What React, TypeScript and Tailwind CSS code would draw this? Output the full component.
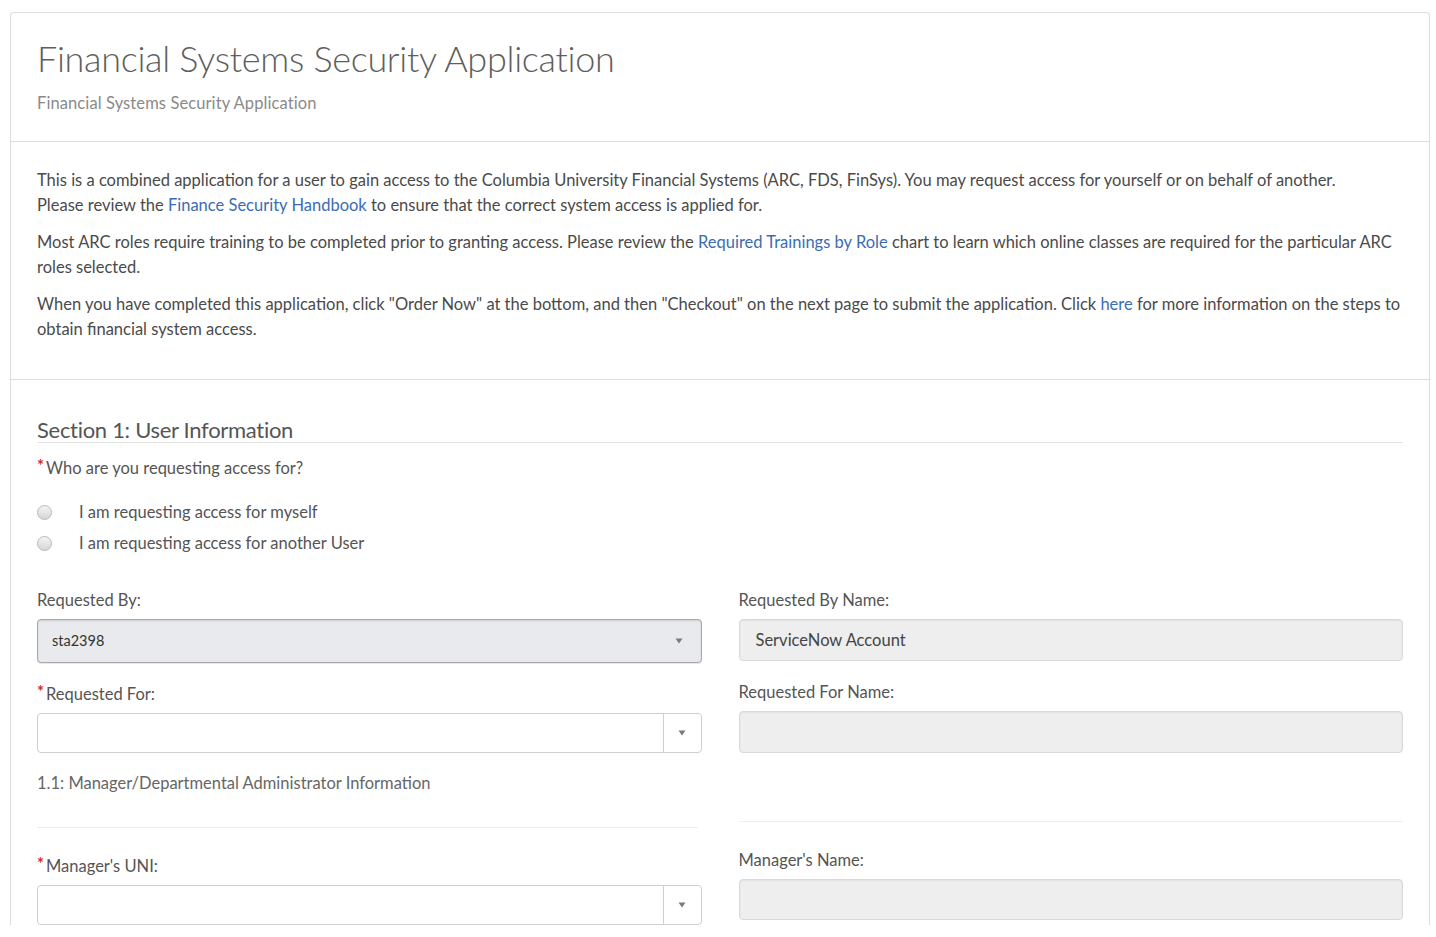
import React from "react";

const font = { fontFamily: "Lato, 'Noto Sans', sans-serif" };

function Caret() {
  return (
    <svg width="8" height="6" viewBox="0 0 8 6" className="block">
      <path d="M0.5 0.5 L7.5 0.5 L4 5.5 Z" fill="#7a7a7a" />
    </svg>
  );
}

function Req() {
  return <span className="text-[#c9302c] font-bold mr-[2px] relative top-[-2px]">*</span>;
}

function Radio({ label }: { label: string }) {
  return (
    <div className="flex items-center h-[31px]">
      <span className="w-[15px] h-[15px] rounded-full border border-[#b9b9b9] bg-gradient-to-b from-[#f4f4f4] to-[#d6d6d6] shrink-0" />
      <span className="ml-[27px] text-[16.5px] text-[#555]">{label}</span>
    </div>
  );
}

function EmptySelect() {
  return (
    <div className="flex h-[40px] rounded-[4px] border border-[#cfcfcf] bg-white">
      <div className="flex-1" />
      <div className="w-[38px] border-l border-[#cfcfcf] flex items-center justify-center">
        <Caret />
      </div>
    </div>
  );
}

function ReadOnly({ value, h = 42 }: { value?: string; h?: number }) {
  return (
    <div
      className={`${h === 42 ? "h-[42px]" : "h-[41px]"} rounded-[4px] border border-[#d9d9d9] bg-[#eeeeee] shadow-[inset_0_1px_2px_rgba(0,0,0,0.06)] flex items-center px-[16px] text-[16.5px] text-[#444]`}
    >
      {value}
    </div>
  );
}

export default function App() {
  return (
    <div className="bg-white min-h-[937px] pt-[12px] pl-[10px] pr-[6px]" style={font}>
      <div className="border border-[#dddddd] rounded-t-[4px] border-b-0">
        {/* header */}
        <div className="px-[26px] pt-[24px] pb-[28px] border-b border-[#dddddd]">
          <h1 className="text-[36px] leading-[42px] font-light text-[#5e5e5e] tracking-[-0.3px]">
            Financial Systems Security Application
          </h1>
          <div className="mt-[14px] text-[16.5px] leading-[20px] text-[#8a8a8a] tracking-[0.1px]">
            Financial Systems Security Application
          </div>
        </div>

        {/* intro */}
        <div className="px-[26px] pt-[26px] pb-[37px] border-b border-[#dddddd] text-[16.5px] leading-[25px] text-[#4a4a4a]">
          <p className="whitespace-nowrap">
            This is a combined application for a user to gain access to the Columbia University Financial Systems (ARC, FDS, FinSys). You may request access for yourself or on behalf of another.
            <br />
            Please review the <span className="text-[#3b6db3]">Finance Security Handbook</span> to ensure that the correct system access is applied for.
          </p>
          <p className="mt-[12px] whitespace-nowrap">
            Most ARC roles require training to be completed prior to granting access. Please review the{" "}
            <span className="text-[#3b6db3]">Required Trainings by Role</span> chart to learn which online classes are required for the particular ARC
            <br />
            roles selected.
          </p>
          <p className="mt-[12px] whitespace-nowrap">
            When you have completed this application, click "Order Now" at the bottom, and then "Checkout" on the next page to submit the application. Click{" "}
            <span className="text-[#3b6db3]">here</span> for more information on the steps to
            <br />
            obtain financial system access.
          </p>
        </div>

        {/* section 1 */}
        <div className="px-[26px] pt-[38px]">
          <div className="border-b border-[#e3e3e3]">
            <h2 className="text-[22px] leading-[24px] text-[#555] tracking-[-0.3px]">Section 1: User Information</h2>
          </div>
          <div className="mt-[14px] text-[16.5px] leading-[22px] text-[#555]">
            <Req />
            Who are you requesting access for?
          </div>
          <div className="mt-[18px]">
            <Radio label="I am requesting access for myself" />
            <Radio label="I am requesting access for another User" />
          </div>

          <div className="grid grid-cols-2 gap-x-[37px] mt-[30px] text-[16.5px] text-[#555]">
            {/* left column */}
            <div className="flex flex-col">
              <div className="leading-[22px] h-[22px]">Requested By:</div>
              <div className="mt-[8px] h-[44px] rounded-[4px] border border-[#a8a8a8] bg-[#e8eaed] shadow-[inset_0_1px_2px_rgba(0,0,0,0.12),0_1px_1px_rgba(0,0,0,0.1)] flex items-center pl-[14px] pr-[18px]">
                <span className="flex-1 text-[14.5px] text-[#333]">sta2398</span>
                <Caret />
              </div>
              <div className="mt-[20px] leading-[22px] h-[22px]">
                <Req />
                Requested For:
              </div>
              <div className="mt-[8px]">
                <EmptySelect />
              </div>
              <div className="mt-[19px] leading-[22px] text-[16.5px] text-[#666]">
                1.1: Manager/Departmental Administrator Information
              </div>
              <div className="mt-[33px] mr-[4px] border-b border-[#eeeeee]" />
              <div className="mt-[27px] leading-[22px] h-[22px]">
                <Req />
                Manager's UNI:
              </div>
              <div className="mt-[8px]">
                <EmptySelect />
              </div>
            </div>

            {/* right column */}
            <div className="flex flex-col">
              <div className="leading-[22px] h-[22px]">Requested By Name:</div>
              <div className="mt-[8px]">
                <ReadOnly value="ServiceNow Account" />
              </div>
              <div className="mt-[20px] leading-[22px] h-[22px]">Requested For Name:</div>
              <div className="mt-[8px]">
                <ReadOnly />
              </div>
              <div className="mt-[68px] border-b border-[#eeeeee]" />
              <div className="mt-[27px] leading-[22px] h-[22px]">Manager's Name:</div>
              <div className="mt-[8px]">
                <ReadOnly h={41} />
              </div>
            </div>
          </div>
        </div>
      </div>
    </div>
  );
}
